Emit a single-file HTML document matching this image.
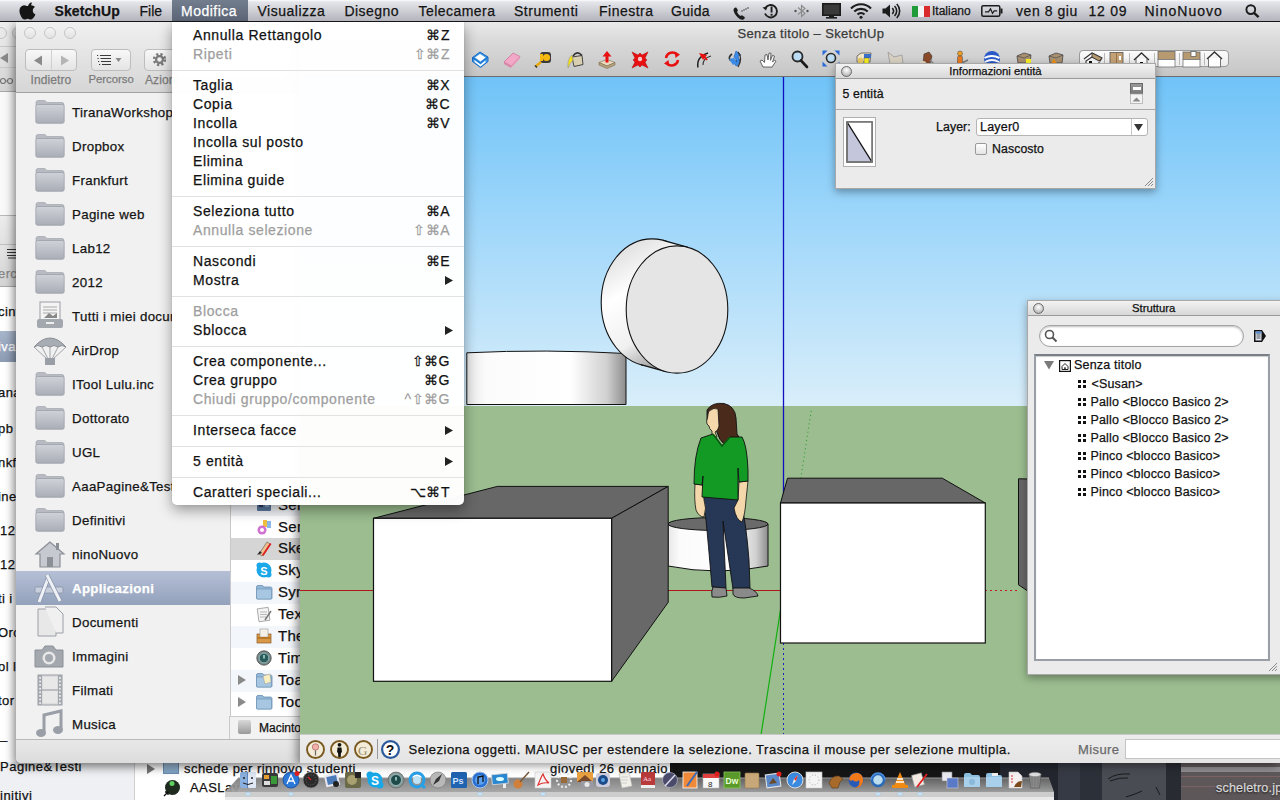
<!DOCTYPE html><html><head><meta charset="utf-8"><style>
*{margin:0;padding:0;box-sizing:border-box}
html,body{width:1280px;height:800px;overflow:hidden;background:#3c3c3c;font-family:"Liberation Sans",sans-serif;color:#111}
.a{position:absolute}
.t{position:absolute;white-space:nowrap;line-height:1;-webkit-text-stroke:0.25px}
svg{position:absolute;overflow:visible}
</style></head><body>
<div class="a" style="left:0px;top:740px;width:1280px;height:60px;background:#161616"></div>
<div class="a" style="left:1000px;top:763px;width:280px;height:37px;background:linear-gradient(90deg,#23262e 0 58px,#363a44 58px 80px,#2c3038 80px 102px,#4a4c54 102px 166px,#292b33 166px 181px,#5e5759 181px)"></div>
<div class="a" style="left:1181px;top:767px;width:99px;height:5px;background:#8e8c8e"></div>
<div class="a" style="left:1181px;top:776px;width:99px;height:1px;background:#7a6264"></div>
<div class="a" style="left:1181px;top:786px;width:99px;height:1px;background:#7a6264"></div>
<svg style="left:1106px;top:767px" width="60" height="33" viewBox="0 0 60 33"><path d="M2 12q8-6 22-5M4 14q10-4 18-3M20 30q10-3 16-6M50 20l4 8" stroke="#1a1a1a" stroke-width="1" fill="none"/></svg>
<div class="t" style="left:1216px;top:782.4px;font-size:12.5px;color:#d8d8d8;letter-spacing:0.2px;text-shadow:0 1px 2px #000">scheletro.jpg</div>
<div class="a" style="left:0px;top:740px;width:670px;height:60px;background:#fff"></div>
<div class="a" style="left:0px;top:740px;width:135px;height:60px;background:#eef0f3;border-right:1px solid #cfcfcf"></div>
<div class="t" style="left:0px;top:760.0px;font-size:13px;color:#111;letter-spacing:0.5px;">Pagine&amp;Testi</div>
<div class="t" style="left:0px;top:789.0px;font-size:13px;color:#111;letter-spacing:0.5px;">initivi</div>
<div class="a" style="left:135px;top:760px;width:535px;height:18px;background:#fff"></div>
<svg style="left:146px;top:764px" width="10" height="10" viewBox="0 0 10 10"><path d="M1 0l8 5-8 5z" fill="#777"/></svg>
<div class="a" style="left:163px;top:762px;width:16px;height:12px;background:linear-gradient(#a9c4de,#7fa3c6);border:1px solid #6a8db0"></div>
<div class="t" style="left:184px;top:761.5px;font-size:13px;color:#111;letter-spacing:0.45px;">schede per rinnovo studenti</div>
<div class="t" style="left:550px;top:761.5px;font-size:13px;color:#111;letter-spacing:0.45px;">giovedì 26 gennaio 2</div>
<svg style="left:163px;top:779px" width="18" height="18" viewBox="0 0 18 18"><circle cx="9.5" cy="8.5" r="7.5" fill="#1e2a1e"/><circle cx="9" cy="4.5" r="2.5" fill="#5fd05f"/><path d="M1 17l4-4M2 13h3v3" stroke="#111" stroke-width="1.3" fill="none"/></svg>
<div class="t" style="left:190px;top:780.5px;font-size:13px;color:#111;letter-spacing:0.45px;">AASLav</div>
<svg style="left:225px;top:776px" width="830" height="24" viewBox="0 0 830 24"><defs><linearGradient id="dk" x1="0" y1="0" x2="0" y2="1"><stop offset="0" stop-color="#6e6e6e" stop-opacity="0.85"/><stop offset="1" stop-color="#a4a4a4" stop-opacity="0.95"/></linearGradient></defs><path d="M13 2H824L829 16H0z" fill="url(#dk)"/><path d="M13 2H824" stroke="#9a9a9a" stroke-width="1"/><path d="M0 16H829v5H0z" fill="#cdcdcd"/><rect x="0" y="21" width="829" height="3" fill="#e9e9e9"/></svg>
<svg style="left:239px;top:771px" width="18" height="18" viewBox="0 0 18 18"><rect x="1" y="1" width="16" height="16" rx="2" fill="#8ab0e0"/><path d="M9 1v16" stroke="#3a5a9a"/><rect x="9" y="1" width="8" height="16" rx="1" fill="#dfe8f4"/><circle cx="5" cy="7" r="1" fill="#222"/><circle cx="13" cy="7" r="1" fill="#222"/><path d="M4 12q5 3 10 0" stroke="#222" fill="none"/></svg>
<svg style="left:261px;top:771px" width="18" height="18" viewBox="0 0 18 18"><rect x="1" y="2" width="16" height="14" rx="2" fill="#3a3a3a"/><rect x="3" y="4" width="5" height="4" fill="#e8a030"/><rect x="10" y="5" width="6" height="8" fill="#3a9a3a"/><rect x="3" y="10" width="6" height="4" fill="#ddd"/></svg>
<svg style="left:282px;top:771px" width="18" height="18" viewBox="0 0 18 18"><circle cx="9" cy="9" r="8" fill="#2a78d8" stroke="#1a4a98" stroke-width="0.8"/><path d="M5 13l4-9 4 9M6 10h6" stroke="#fff" stroke-width="1.3" fill="none"/><circle cx="15" cy="2.5" r="2.5" fill="#e02020"/></svg>
<svg style="left:302px;top:771px" width="18" height="18" viewBox="0 0 18 18"><circle cx="9" cy="9" r="8" fill="#2a2a2a" stroke="#888" stroke-width="0.8"/><circle cx="9" cy="9" r="5" fill="none" stroke="#666" stroke-dasharray="1 1.5"/><path d="M9 9l-3-3" stroke="#e02020" stroke-width="1.2"/></svg>
<svg style="left:323px;top:771px" width="18" height="18" viewBox="0 0 18 18"><rect x="2" y="3" width="14" height="12" fill="#e8e8f0" transform="rotate(-12 9 9)"/><rect x="4" y="5" width="10" height="8" fill="#4a7ab8" transform="rotate(-12 9 9)"/><circle cx="13" cy="13" r="3" fill="#222"/></svg>
<svg style="left:344px;top:771px" width="18" height="18" viewBox="0 0 18 18"><rect x="1" y="1" width="16" height="16" rx="2" fill="#6a6a48"/><circle cx="8" cy="9" r="5" fill="#a8a070"/><rect x="11" y="1" width="6" height="6" fill="#222"/></svg>
<svg style="left:366px;top:771px" width="18" height="18" viewBox="0 0 18 18"><circle cx="9" cy="9" r="7.5" fill="#18a8e8"/><circle cx="4" cy="4" r="3.5" fill="#18a8e8"/><circle cx="14" cy="14" r="3.5" fill="#18a8e8"/><text x="5" y="13.5" font-size="12" font-weight="bold" font-family="Liberation Sans" fill="#fff">S</text></svg>
<svg style="left:387px;top:771px" width="18" height="18" viewBox="0 0 18 18"><circle cx="9" cy="9" r="8" fill="#8a9a9a" stroke="#555" stroke-width="0.6"/><circle cx="9" cy="9" r="5.5" fill="#1e4a4a" stroke="#aacccc" stroke-width="0.8"/><path d="M9 6v3.5" stroke="#cee" stroke-width="1.3"/></svg>
<svg style="left:408px;top:771px" width="18" height="18" viewBox="0 0 18 18"><circle cx="9" cy="9" r="7" fill="none" stroke="#28a0e8" stroke-width="3"/><path d="M13 13l4 4" stroke="#28a0e8" stroke-width="3"/><circle cx="9" cy="9" r="4" fill="#bfe4f8"/></svg>
<svg style="left:429px;top:771px" width="18" height="18" viewBox="0 0 18 18"><circle cx="9" cy="9" r="8" fill="#b8b8b8" stroke="#777" stroke-width="0.6"/><path d="M4 14l3-6 6-5-3 7z" fill="#333"/></svg>
<svg style="left:450px;top:771px" width="18" height="18" viewBox="0 0 18 18"><rect x="1" y="1" width="16" height="16" rx="1.5" fill="#1f62b0"/><text x="2.5" y="12.5" font-size="9" font-weight="bold" font-family="Liberation Sans" fill="#cfe4ff">Ps</text></svg>
<svg style="left:471px;top:771px" width="18" height="18" viewBox="0 0 18 18"><circle cx="9" cy="9" r="8" fill="#2a70d0" stroke="#aac8f0" stroke-width="1"/><circle cx="9" cy="9" r="5" fill="#5aa0f0"/><path d="M7 13V6l5-1v6" stroke="#111" stroke-width="1.3" fill="none"/></svg>
<svg style="left:491px;top:771px" width="18" height="18" viewBox="0 0 18 18"><rect x="1" y="3" width="16" height="10" fill="#2a88d0" stroke="#ddd" stroke-width="0.8" transform="rotate(-6 9 9)"/><ellipse cx="9" cy="8" rx="4" ry="2" fill="#dff" /><rect x="12" y="13" width="3" height="4" fill="#eee"/></svg>
<svg style="left:512px;top:771px" width="18" height="18" viewBox="0 0 18 18"><circle cx="6" cy="13" r="4.5" fill="#d0803a"/><path d="M8 11l9-10" stroke="#7a5a3a" stroke-width="1.5"/></svg>
<svg style="left:534px;top:771px" width="18" height="18" viewBox="0 0 18 18"><rect x="1" y="1" width="16" height="16" fill="#f4f4f4" stroke="#ccc" stroke-width="0.6"/><path d="M4 14q3-8 5-11q2 6 6 9q-6-1-11 2z" fill="none" stroke="#e03030" stroke-width="1.2"/></svg>
<svg style="left:555px;top:771px" width="18" height="18" viewBox="0 0 18 18"><circle cx="9" cy="9" r="7" fill="none" stroke="#e8e8e8" stroke-width="2.2" stroke-dasharray="2 2"/><rect x="6" y="6" width="6" height="6" fill="#9a6a3a"/></svg>
<svg style="left:576px;top:771px" width="18" height="18" viewBox="0 0 18 18"><rect x="1" y="1" width="16" height="10" fill="#e8a040"/><path d="M1 11l8-7 8 7z" fill="#7a4a2a"/><rect x="5" y="10" width="12" height="7" rx="1" fill="#9a9aa4"/><circle cx="11" cy="13.5" r="2.5" fill="#e8e8e8"/></svg>
<svg style="left:594px;top:771px" width="18" height="18" viewBox="0 0 18 18"><rect x="2" y="2" width="14" height="14" rx="3" fill="#ccd"/><circle cx="9" cy="9" r="5" fill="#1a4a8a"/><circle cx="9" cy="9" r="2" fill="#5aa0e0"/></svg>
<svg style="left:616px;top:771px" width="18" height="18" viewBox="0 0 18 18"><path d="M3 3l10-2 3 14-10 2z" fill="#f0f0e8" stroke="#bbb" stroke-width="0.6"/><path d="M5 6h7M5 9h7M5 12h6" stroke="#ccc"/></svg>
<svg style="left:639px;top:771px" width="18" height="18" viewBox="0 0 18 18"><rect x="2" y="1" width="14" height="16" rx="1" fill="#b83a3a"/><rect x="2" y="14" width="14" height="3" fill="#eee"/><text x="4" y="10" font-size="7" font-family="Liberation Serif" fill="#fde">Aa</text></svg>
<svg style="left:661px;top:771px" width="18" height="18" viewBox="0 0 18 18"><circle cx="9" cy="9" r="7.5" fill="#4a4a6a" stroke="#aab" stroke-width="0.8"/><path d="M4 15l10-11" stroke="#dde" stroke-width="1.5"/></svg>
<svg style="left:681px;top:771px" width="18" height="18" viewBox="0 0 18 18"><rect x="2" y="1" width="14" height="16" fill="#f08a3a" stroke="#fff" stroke-width="0.8"/><path d="M6 15l10-14" stroke="#3a6ab8" stroke-width="2"/></svg>
<svg style="left:702px;top:771px" width="18" height="18" viewBox="0 0 18 18"><rect x="1" y="3" width="16" height="14" fill="#f8f8f8" stroke="#bbb" stroke-width="0.6"/><rect x="1" y="3" width="16" height="4" fill="#e04040"/><text x="6" y="15.5" font-size="8" font-family="Liberation Sans" fill="#222">8</text><circle cx="15" cy="3" r="2.5" fill="#e02020"/></svg>
<svg style="left:723px;top:771px" width="18" height="18" viewBox="0 0 18 18"><rect x="1" y="1" width="16" height="16" fill="#5a9a2a" stroke="#8ac85a" stroke-width="0.8"/><text x="2.5" y="12.5" font-size="8.5" font-weight="bold" font-family="Liberation Sans" fill="#eaffd8">Dw</text></svg>
<svg style="left:743px;top:771px" width="18" height="18" viewBox="0 0 18 18"><rect x="2" y="2" width="14" height="15" rx="1" fill="#c8a878" stroke="#9a7a4a" stroke-width="0.6"/></svg>
<svg style="left:764px;top:771px" width="18" height="18" viewBox="0 0 18 18"><rect x="2" y="3" width="14" height="13" fill="#5a88c8" stroke="#e8e8e8" stroke-width="1" transform="rotate(-8 9 9)"/><path d="M5 13l4-6 4 5z" fill="#6a4a2a"/><circle cx="15" cy="3" r="2.5" fill="#e02020"/></svg>
<svg style="left:786px;top:771px" width="18" height="18" viewBox="0 0 18 18"><circle cx="9" cy="9" r="8" fill="#3a8ae0" stroke="#ddd" stroke-width="1"/><path d="M12 4l-2 6-4 4 2-6z" fill="#eee"/><path d="M12 4l-4 4 2 2z" fill="#e03030"/></svg>
<svg style="left:805px;top:771px" width="18" height="18" viewBox="0 0 18 18"><rect x="1" y="1" width="16" height="16" fill="#f4f4f4" stroke="#ccc" stroke-width="0.6"/><circle cx="9" cy="9" r="5" fill="none" stroke="#aaa" stroke-dasharray="1 2"/></svg>
<svg style="left:827px;top:771px" width="18" height="18" viewBox="0 0 18 18"><path d="M2 12q3-8 10-7l4 3-3 3-2 6H5z" fill="#a86a2a" stroke="#5a3a1a" stroke-width="0.6"/></svg>
<svg style="left:847px;top:771px" width="18" height="18" viewBox="0 0 18 18"><circle cx="9" cy="9" r="7.5" fill="#2a5ab8"/><path d="M2 8q2-7 9-6 6 2 5 9-2 6-8 6 6-3 4-8q-3 3-6 0-3 2-4-1z" fill="#f07a1a"/></svg>
<svg style="left:869px;top:771px" width="18" height="18" viewBox="0 0 18 18"><circle cx="9" cy="9" r="6" fill="#bde" stroke="#2a6ab8" stroke-width="2.5"/><path d="M2 9a7 7 0 0 1 14 0" fill="none" stroke="#4a90e0" stroke-width="1.5"/></svg>
<svg style="left:891px;top:771px" width="18" height="18" viewBox="0 0 18 18"><path d="M9 1l6 14H3z" fill="#f08a10"/><path d="M6 8h6M5 11h8" stroke="#fff" stroke-width="1.5"/><rect x="1" y="14" width="16" height="3" fill="#f08a10"/></svg>
<svg style="left:911px;top:771px" width="18" height="18" viewBox="0 0 18 18"><rect x="2" y="3" width="10" height="12" fill="#f4ece4" stroke="#aaa" stroke-width="0.6" transform="rotate(-15 7 9)"/><path d="M6 16l10-13" stroke="#e02020" stroke-width="1.8"/></svg>
<svg style="left:941px;top:771px" width="18" height="18" viewBox="0 0 18 18"><rect x="1" y="1" width="10" height="9" fill="#e8e8f0" stroke="#888" stroke-width="0.6"/><rect x="6" y="7" width="11" height="10" fill="#5a7ac8" stroke="#ccd" stroke-width="0.6"/></svg>
<svg style="left:963px;top:771px" width="18" height="18" viewBox="0 0 18 18"><path d="M1 4q0-2 2-2h4l2 2h6q2 0 2 2v10H1z" fill="#8ec0e0"/><rect x="1" y="6" width="16" height="10" rx="1" fill="#a8d0ea"/><circle cx="9" cy="11" r="3" fill="#8ab8d8"/></svg>
<svg style="left:985px;top:771px" width="18" height="18" viewBox="0 0 18 18"><path d="M1 4q0-2 2-2h4l2 2h6q2 0 2 2v10H1z" fill="#8ec0e0"/><rect x="1" y="6" width="16" height="10" rx="1" fill="#a8d0ea"/><rect x="7" y="2" width="6" height="3" fill="#eee"/></svg>
<svg style="left:1006px;top:771px" width="18" height="18" viewBox="0 0 18 18"><path d="M3 1h9l4 4v12H3z" fill="#f4f0f0" stroke="#ccc" stroke-width="0.6"/><path d="M5 5h2M5 8h2M5 11h2" stroke="#e07070" stroke-width="1.5"/><path d="M8 16q2-6 8-6l-1 6z" fill="#7a4a1a"/></svg>
<svg style="left:1026px;top:771px" width="18" height="18" viewBox="0 0 18 18"><path d="M3 3h12l-1.5 14h-9z" fill="#8a8a8a" stroke="#555" stroke-width="0.6"/><ellipse cx="9" cy="3.5" rx="6" ry="2.2" fill="#ddd" stroke="#777" stroke-width="0.6"/><path d="M6 6v9M9 6v9M12 6v9" stroke="#6a6a6a" stroke-width="0.6"/></svg>
<div class="a" style="left:246px;top:793px;width:4px;height:2px;background:#bfe6ff;border-radius:1px;box-shadow:0 0 3px #9cf"></div>
<div class="a" style="left:289px;top:793px;width:4px;height:2px;background:#bfe6ff;border-radius:1px;box-shadow:0 0 3px #9cf"></div>
<div class="a" style="left:478px;top:793px;width:4px;height:2px;background:#bfe6ff;border-radius:1px;box-shadow:0 0 3px #9cf"></div>
<div class="a" style="left:541px;top:793px;width:4px;height:2px;background:#bfe6ff;border-radius:1px;box-shadow:0 0 3px #9cf"></div>
<div class="a" style="left:876px;top:793px;width:4px;height:2px;background:#bfe6ff;border-radius:1px;box-shadow:0 0 3px #9cf"></div>
<div class="a" style="left:898px;top:793px;width:4px;height:2px;background:#bfe6ff;border-radius:1px;box-shadow:0 0 3px #9cf"></div>
<div class="a" style="left:918px;top:793px;width:4px;height:2px;background:#bfe6ff;border-radius:1px;box-shadow:0 0 3px #9cf"></div>
<div class="a" style="left:0px;top:22px;width:16px;height:740px;background:#fff"></div>
<div class="a" style="left:0px;top:22px;width:16px;height:70px;background:linear-gradient(#eeeeee,#d4d4d4);border-bottom:1px solid #a8a8a8"></div>
<div class="a" style="left:0px;top:46px;width:16px;height:1px;background:#c8c8c8"></div>
<div class="a" style="left:0px;top:67px;width:16px;height:1px;background:#c8c8c8"></div>
<div class="a" style="left:-5px;top:27px;width:12px;height:12px;border-radius:50%;border:1px solid #c2c2c2;background:#e8e8e8"></div>
<div class="a" style="left:12px;top:27px;width:12px;height:12px;border-radius:50%;border:1px solid #c2c2c2;background:#e8e8e8"></div>
<svg style="left:0px;top:53px" width="9" height="10" viewBox="0 0 9 10"><path d="M0 5L8 0v10z" fill="#8a8a8a"/></svg>
<svg style="left:0px;top:77px" width="14" height="8" viewBox="0 0 14 8"><circle cx="3" cy="4" r="2.5" fill="none" stroke="#777" stroke-width="1.2"/><circle cx="10" cy="4" r="2.5" fill="none" stroke="#777" stroke-width="1.2"/><path d="M5.5 4h2" stroke="#777"/></svg>
<div class="a" style="left:0px;top:92px;width:16px;height:123px;background:#f9f9f9"></div>
<div class="a" style="left:0px;top:215px;width:16px;height:29px;background:linear-gradient(#ececec,#e2e2e2);border-top:1px solid #b8b8b8"></div>
<div class="a" style="left:0px;top:244px;width:16px;height:43px;background:linear-gradient(#e4e4e4,#d4d4d4);border-top:1px solid #c0c0c0;border-bottom:1px solid #a8a8a8"></div>
<svg style="left:4px;top:248px" width="12" height="11" viewBox="0 0 12 11"><path d="M3 1.5h9M3 4.5h9M3 7.5h9M4 10h8" stroke="#333" stroke-width="1.1"/></svg>
<div class="a" style="left:0px;top:331px;width:16px;height:31px;background:linear-gradient(#a8b6cc,#8d9bb3)"></div>
<div class="t" style="left:-2px;top:267.0px;font-size:13px;color:#888;letter-spacing:0.4px;">erc</div>
<div class="t" style="left:-2px;top:305.0px;font-size:13px;color:#111;letter-spacing:0.4px;">cint</div>
<div class="t" style="left:-2px;top:340.0px;font-size:13px;color:#fff;letter-spacing:0.4px;">iva</div>
<div class="t" style="left:-2px;top:386.0px;font-size:13px;color:#111;letter-spacing:0.4px;">ana</div>
<div class="t" style="left:-2px;top:422.0px;font-size:13px;color:#111;letter-spacing:0.4px;">pb</div>
<div class="t" style="left:-2px;top:456.0px;font-size:13px;color:#111;letter-spacing:0.4px;">nkf</div>
<div class="t" style="left:-2px;top:490.0px;font-size:13px;color:#111;letter-spacing:0.4px;">ine</div>
<div class="t" style="left:0px;top:524.0px;font-size:13px;color:#111;letter-spacing:0.4px;">12</div>
<div class="t" style="left:0px;top:558.0px;font-size:13px;color:#111;letter-spacing:0.4px;">12</div>
<div class="t" style="left:-2px;top:592.0px;font-size:13px;color:#111;letter-spacing:0.4px;">ti i</div>
<div class="t" style="left:-2px;top:626.0px;font-size:13px;color:#111;letter-spacing:0.4px;">Oro</div>
<div class="t" style="left:-2px;top:660.0px;font-size:13px;color:#111;letter-spacing:0.4px;">ol l</div>
<div class="t" style="left:-2px;top:694.0px;font-size:13px;color:#111;letter-spacing:0.4px;">tor</div>
<div class="t" style="left:0px;top:728.0px;font-size:13px;color:#111;letter-spacing:0.4px;">_</div>
<div class="a" style="left:16px;top:22px;width:284px;height:741px;background:#ececec;border-radius:0 0 5px 5px;box-shadow:-2px 4px 10px rgba(0,0,0,.5)"></div>
<div class="a" style="left:16px;top:22px;width:284px;height:71px;background:linear-gradient(#f0f0f0,#e6e6e6 40%,#d6d6d6);border-bottom:1px solid #a3a3a3"></div>
<div class="a" style="left:24px;top:27px;width:12px;height:12px;border-radius:50%;border:1.4px solid #c6c6c6;background:linear-gradient(#f4f4f4,#e2e2e2)"></div>
<div class="a" style="left:44px;top:27px;width:12px;height:12px;border-radius:50%;border:1.4px solid #c6c6c6;background:linear-gradient(#f4f4f4,#e2e2e2)"></div>
<div class="a" style="left:64px;top:27px;width:12px;height:12px;border-radius:50%;border:1.4px solid #c6c6c6;background:linear-gradient(#f4f4f4,#e2e2e2)"></div>
<div class="a" style="left:25px;top:49px;width:52px;height:22px;border:1px solid #bdbdbd;border-radius:4px;background:linear-gradient(#f8f8f8,#e4e4e4)"></div>
<div class="a" style="left:51px;top:50px;width:1px;height:20px;background:#d0d0d0"></div>
<svg style="left:34px;top:55px" width="36" height="11" viewBox="0 0 36 11"><path d="M0 5.5L8 0.5v10z" fill="#8a8a8a"/><path d="M35 5.5L27 0.5v10z" fill="#b4b4b4"/></svg>
<div class="a" style="left:91px;top:49px;width:40px;height:22px;border:1px solid #bdbdbd;border-radius:4px;background:linear-gradient(#f8f8f8,#e4e4e4)"></div>
<svg style="left:97px;top:54px" width="30" height="12" viewBox="0 0 30 12"><g stroke="#3a3a3a" stroke-width="1"><path d="M3 1.5h11M3.5 4.5h10.5M4 7.5h10M5 10.5h9"/></g><g fill="#3a3a3a"><rect x="0" y="1" width="1.2" height="1"/><rect x="0.5" y="4" width="1.2" height="1"/><rect x="1" y="7" width="1.2" height="1"/><rect x="2" y="10" width="1.2" height="1"/></g><path d="M18.5 4h6l-3 4z" fill="#8a8a8a"/></svg>
<div class="a" style="left:144px;top:49px;width:40px;height:22px;border:1px solid #bdbdbd;border-radius:4px;background:linear-gradient(#f8f8f8,#e4e4e4)"></div>
<svg style="left:152px;top:52px" width="15" height="15" viewBox="0 0 15 15"><circle cx="7.5" cy="7.5" r="5.3" fill="none" stroke="#7a7a7a" stroke-width="2.8" stroke-dasharray="2.2 2"/><circle cx="7.5" cy="7.5" r="3.4" fill="none" stroke="#7a7a7a" stroke-width="2.2"/></svg>
<div class="t" style="left:30.5px;top:73.8px;font-size:12px;color:#7b7b7b;letter-spacing:0.1px;">Indietro</div>
<div class="t" style="left:88.5px;top:74.4px;font-size:11.3px;color:#7b7b7b;letter-spacing:0px;">Percorso</div>
<div class="t" style="left:145px;top:73.8px;font-size:12px;color:#7b7b7b;letter-spacing:0.1px;">Azioni</div>
<div class="a" style="left:16px;top:93px;width:214px;height:646px;background:#f1f1f1"></div>
<div class="a" style="left:16px;top:571px;width:214px;height:34px;background:linear-gradient(#b5c0d6,#93a1bb)"></div>
<div class="a" style="left:0;top:0;width:172px;height:800px;overflow:hidden"><div class="t" style="left:72px;top:105.7px;font-size:13.3px;color:#151515;letter-spacing:0.32px;">TiranaWorkshop</div></div>
<svg style="left:35px;top:99px" width="30" height="25" viewBox="0 0 30 25"><defs><linearGradient id="fg" x1="0" y1="0" x2="0" y2="1"><stop offset="0" stop-color="#cfd2d8"/><stop offset="1" stop-color="#a9adb6"/></linearGradient></defs><path d="M1 3.5q0-2 2-2h7l2 2h15q2 0 2 2v1H1z" fill="#b8bbc2" stroke="#9a9ea6" stroke-width="0.6"/><rect x="0.8" y="5.5" width="28.4" height="18.8" rx="1.8" fill="url(#fg)" stroke="#979ba3" stroke-width="0.7"/></svg>
<div class="a" style="left:0;top:0;width:172px;height:800px;overflow:hidden"><div class="t" style="left:72px;top:139.7px;font-size:13.3px;color:#151515;letter-spacing:0.32px;">Dropbox</div></div>
<svg style="left:35px;top:133px" width="30" height="25" viewBox="0 0 30 25"><defs><linearGradient id="fg" x1="0" y1="0" x2="0" y2="1"><stop offset="0" stop-color="#cfd2d8"/><stop offset="1" stop-color="#a9adb6"/></linearGradient></defs><path d="M1 3.5q0-2 2-2h7l2 2h15q2 0 2 2v1H1z" fill="#b8bbc2" stroke="#9a9ea6" stroke-width="0.6"/><rect x="0.8" y="5.5" width="28.4" height="18.8" rx="1.8" fill="url(#fg)" stroke="#979ba3" stroke-width="0.7"/></svg>
<div class="a" style="left:0;top:0;width:172px;height:800px;overflow:hidden"><div class="t" style="left:72px;top:173.7px;font-size:13.3px;color:#151515;letter-spacing:0.32px;">Frankfurt</div></div>
<svg style="left:35px;top:167px" width="30" height="25" viewBox="0 0 30 25"><defs><linearGradient id="fg" x1="0" y1="0" x2="0" y2="1"><stop offset="0" stop-color="#cfd2d8"/><stop offset="1" stop-color="#a9adb6"/></linearGradient></defs><path d="M1 3.5q0-2 2-2h7l2 2h15q2 0 2 2v1H1z" fill="#b8bbc2" stroke="#9a9ea6" stroke-width="0.6"/><rect x="0.8" y="5.5" width="28.4" height="18.8" rx="1.8" fill="url(#fg)" stroke="#979ba3" stroke-width="0.7"/></svg>
<div class="a" style="left:0;top:0;width:172px;height:800px;overflow:hidden"><div class="t" style="left:72px;top:207.7px;font-size:13.3px;color:#151515;letter-spacing:0.32px;">Pagine web</div></div>
<svg style="left:35px;top:201px" width="30" height="25" viewBox="0 0 30 25"><defs><linearGradient id="fg" x1="0" y1="0" x2="0" y2="1"><stop offset="0" stop-color="#cfd2d8"/><stop offset="1" stop-color="#a9adb6"/></linearGradient></defs><path d="M1 3.5q0-2 2-2h7l2 2h15q2 0 2 2v1H1z" fill="#b8bbc2" stroke="#9a9ea6" stroke-width="0.6"/><rect x="0.8" y="5.5" width="28.4" height="18.8" rx="1.8" fill="url(#fg)" stroke="#979ba3" stroke-width="0.7"/></svg>
<div class="a" style="left:0;top:0;width:172px;height:800px;overflow:hidden"><div class="t" style="left:72px;top:241.7px;font-size:13.3px;color:#151515;letter-spacing:0.32px;">Lab12</div></div>
<svg style="left:35px;top:235px" width="30" height="25" viewBox="0 0 30 25"><defs><linearGradient id="fg" x1="0" y1="0" x2="0" y2="1"><stop offset="0" stop-color="#cfd2d8"/><stop offset="1" stop-color="#a9adb6"/></linearGradient></defs><path d="M1 3.5q0-2 2-2h7l2 2h15q2 0 2 2v1H1z" fill="#b8bbc2" stroke="#9a9ea6" stroke-width="0.6"/><rect x="0.8" y="5.5" width="28.4" height="18.8" rx="1.8" fill="url(#fg)" stroke="#979ba3" stroke-width="0.7"/></svg>
<div class="a" style="left:0;top:0;width:172px;height:800px;overflow:hidden"><div class="t" style="left:72px;top:275.7px;font-size:13.3px;color:#151515;letter-spacing:0.32px;">2012</div></div>
<svg style="left:35px;top:269px" width="30" height="25" viewBox="0 0 30 25"><defs><linearGradient id="fg" x1="0" y1="0" x2="0" y2="1"><stop offset="0" stop-color="#cfd2d8"/><stop offset="1" stop-color="#a9adb6"/></linearGradient></defs><path d="M1 3.5q0-2 2-2h7l2 2h15q2 0 2 2v1H1z" fill="#b8bbc2" stroke="#9a9ea6" stroke-width="0.6"/><rect x="0.8" y="5.5" width="28.4" height="18.8" rx="1.8" fill="url(#fg)" stroke="#979ba3" stroke-width="0.7"/></svg>
<div class="a" style="left:0;top:0;width:172px;height:800px;overflow:hidden"><div class="t" style="left:72px;top:309.7px;font-size:13.3px;color:#151515;letter-spacing:0.32px;">Tutti i miei documenti</div></div>
<svg style="left:35px;top:300px" width="30" height="30" viewBox="0 0 30 30"><rect x="5" y="2" width="20" height="19" fill="#f4f4f4" stroke="#9a9ea6"/><path d="M8 7h14M8 10h14M8 13h14" stroke="#aaa"/><path d="M9 18l5-5 4 3 4-3v5z" fill="#888"/><rect x="2" y="19" width="26" height="9" rx="2" fill="#a3a7ae"/><rect x="11" y="22" width="8" height="2" fill="#eee"/></svg>
<div class="a" style="left:0;top:0;width:172px;height:800px;overflow:hidden"><div class="t" style="left:72px;top:343.7px;font-size:13.3px;color:#151515;letter-spacing:0.32px;">AirDrop</div></div>
<svg style="left:32px;top:335px" width="36" height="32" viewBox="0 0 36 32"><path d="M2 12Q18-6 34 12Q30 9 26 12Q22 9 18 12Q14 9 10 12Q6 9 2 12z" fill="#a8acb3" stroke="#8b8f96"/><path d="M2 12L15 24M10 12L16 24M26 12L20 24M34 12L21 24M18 12v12" stroke="#8b8f96" stroke-width="0.8"/><rect x="13" y="23" width="10" height="7" fill="#9a9ea6"/></svg>
<div class="a" style="left:0;top:0;width:172px;height:800px;overflow:hidden"><div class="t" style="left:72px;top:377.7px;font-size:13.3px;color:#151515;letter-spacing:0.32px;">ITool Lulu.inc</div></div>
<svg style="left:35px;top:371px" width="30" height="25" viewBox="0 0 30 25"><defs><linearGradient id="fg" x1="0" y1="0" x2="0" y2="1"><stop offset="0" stop-color="#cfd2d8"/><stop offset="1" stop-color="#a9adb6"/></linearGradient></defs><path d="M1 3.5q0-2 2-2h7l2 2h15q2 0 2 2v1H1z" fill="#b8bbc2" stroke="#9a9ea6" stroke-width="0.6"/><rect x="0.8" y="5.5" width="28.4" height="18.8" rx="1.8" fill="url(#fg)" stroke="#979ba3" stroke-width="0.7"/></svg>
<div class="a" style="left:0;top:0;width:172px;height:800px;overflow:hidden"><div class="t" style="left:72px;top:411.7px;font-size:13.3px;color:#151515;letter-spacing:0.32px;">Dottorato</div></div>
<svg style="left:35px;top:405px" width="30" height="25" viewBox="0 0 30 25"><defs><linearGradient id="fg" x1="0" y1="0" x2="0" y2="1"><stop offset="0" stop-color="#cfd2d8"/><stop offset="1" stop-color="#a9adb6"/></linearGradient></defs><path d="M1 3.5q0-2 2-2h7l2 2h15q2 0 2 2v1H1z" fill="#b8bbc2" stroke="#9a9ea6" stroke-width="0.6"/><rect x="0.8" y="5.5" width="28.4" height="18.8" rx="1.8" fill="url(#fg)" stroke="#979ba3" stroke-width="0.7"/></svg>
<div class="a" style="left:0;top:0;width:172px;height:800px;overflow:hidden"><div class="t" style="left:72px;top:445.7px;font-size:13.3px;color:#151515;letter-spacing:0.32px;">UGL</div></div>
<svg style="left:35px;top:439px" width="30" height="25" viewBox="0 0 30 25"><defs><linearGradient id="fg" x1="0" y1="0" x2="0" y2="1"><stop offset="0" stop-color="#cfd2d8"/><stop offset="1" stop-color="#a9adb6"/></linearGradient></defs><path d="M1 3.5q0-2 2-2h7l2 2h15q2 0 2 2v1H1z" fill="#b8bbc2" stroke="#9a9ea6" stroke-width="0.6"/><rect x="0.8" y="5.5" width="28.4" height="18.8" rx="1.8" fill="url(#fg)" stroke="#979ba3" stroke-width="0.7"/></svg>
<div class="a" style="left:0;top:0;width:172px;height:800px;overflow:hidden"><div class="t" style="left:72px;top:479.7px;font-size:13.3px;color:#151515;letter-spacing:0.32px;">AaaPagine&amp;Testi</div></div>
<svg style="left:35px;top:473px" width="30" height="25" viewBox="0 0 30 25"><defs><linearGradient id="fg" x1="0" y1="0" x2="0" y2="1"><stop offset="0" stop-color="#cfd2d8"/><stop offset="1" stop-color="#a9adb6"/></linearGradient></defs><path d="M1 3.5q0-2 2-2h7l2 2h15q2 0 2 2v1H1z" fill="#b8bbc2" stroke="#9a9ea6" stroke-width="0.6"/><rect x="0.8" y="5.5" width="28.4" height="18.8" rx="1.8" fill="url(#fg)" stroke="#979ba3" stroke-width="0.7"/></svg>
<div class="a" style="left:0;top:0;width:172px;height:800px;overflow:hidden"><div class="t" style="left:72px;top:513.7px;font-size:13.3px;color:#151515;letter-spacing:0.32px;">Definitivi</div></div>
<svg style="left:35px;top:507px" width="30" height="25" viewBox="0 0 30 25"><defs><linearGradient id="fg" x1="0" y1="0" x2="0" y2="1"><stop offset="0" stop-color="#cfd2d8"/><stop offset="1" stop-color="#a9adb6"/></linearGradient></defs><path d="M1 3.5q0-2 2-2h7l2 2h15q2 0 2 2v1H1z" fill="#b8bbc2" stroke="#9a9ea6" stroke-width="0.6"/><rect x="0.8" y="5.5" width="28.4" height="18.8" rx="1.8" fill="url(#fg)" stroke="#979ba3" stroke-width="0.7"/></svg>
<div class="a" style="left:0;top:0;width:172px;height:800px;overflow:hidden"><div class="t" style="left:72px;top:547.7px;font-size:13.3px;color:#151515;letter-spacing:0.32px;">ninoNuovo</div></div>
<svg style="left:35px;top:540px" width="30" height="28" viewBox="0 0 30 28"><path d="M15 2L1 14h4v13h20V14h4z" fill="#c6c9cf" stroke="#8b8f96" stroke-width="1.2"/><rect x="21" y="3" width="3" height="7" fill="#8b8f96"/><rect x="12" y="17" width="6" height="10" fill="#8b8f96"/></svg>
<div class="a" style="left:0;top:0;width:172px;height:800px;overflow:hidden"><div class="t" style="left:72px;top:581.7px;font-size:13.3px;color:#fff;letter-spacing:0.32px;font-weight:bold;">Applicazioni</div></div>
<svg style="left:32px;top:573px" width="34" height="32" viewBox="0 0 34 32"><rect x="3" y="14" width="28" height="6" rx="1" fill="#c8cfdc" stroke="#8a95aa" stroke-width="0.8"/><path d="M17 3L7 29" stroke="#8a95aa" stroke-width="4.5"/><path d="M17 3L7 29" stroke="#eef1f6" stroke-width="3"/><path d="M15 2l13 26" stroke="#8a95aa" stroke-width="4.5"/><path d="M15 2l13 26" stroke="#eef1f6" stroke-width="3"/></svg>
<div class="a" style="left:0;top:0;width:172px;height:800px;overflow:hidden"><div class="t" style="left:72px;top:615.7px;font-size:13.3px;color:#151515;letter-spacing:0.32px;">Documenti</div></div>
<svg style="left:35px;top:606px" width="30" height="32" viewBox="0 0 30 32"><path d="M3 3h13l5 5v22H3z" fill="#e8e8e8" stroke="#9a9ea6"/><path d="M10 1h11l7 7v19h-7" fill="#f0f0f0" stroke="#9a9ea6"/></svg>
<div class="a" style="left:0;top:0;width:172px;height:800px;overflow:hidden"><div class="t" style="left:72px;top:649.7px;font-size:13.3px;color:#151515;letter-spacing:0.32px;">Immagini</div></div>
<svg style="left:33px;top:643px" width="32" height="26" viewBox="0 0 32 26"><path d="M2 7h7l3-4h8l3 4h7v17H2z" fill="#a3a7ae" stroke="#8b8f96"/><circle cx="16" cy="15" r="6.5" fill="#e8e8e8"/><circle cx="16" cy="15" r="4" fill="#a3a7ae"/></svg>
<div class="a" style="left:0;top:0;width:172px;height:800px;overflow:hidden"><div class="t" style="left:72px;top:683.7px;font-size:13.3px;color:#151515;letter-spacing:0.32px;">Filmati</div></div>
<svg style="left:35px;top:674px" width="30" height="32" viewBox="0 0 30 32"><rect x="3" y="1" width="24" height="30" fill="#dcdcdc" stroke="#9a9ea6"/><rect x="3" y="1" width="4" height="30" fill="#a3a7ae"/><rect x="23" y="1" width="4" height="30" fill="#a3a7ae"/><rect x="4.3" y="3.0" width="1.6" height="1.8" fill="#f4f4f4"/><rect x="24.1" y="3.0" width="1.6" height="1.8" fill="#f4f4f4"/><rect x="4.3" y="6.6" width="1.6" height="1.8" fill="#f4f4f4"/><rect x="24.1" y="6.6" width="1.6" height="1.8" fill="#f4f4f4"/><rect x="4.3" y="10.2" width="1.6" height="1.8" fill="#f4f4f4"/><rect x="24.1" y="10.2" width="1.6" height="1.8" fill="#f4f4f4"/><rect x="4.3" y="13.8" width="1.6" height="1.8" fill="#f4f4f4"/><rect x="24.1" y="13.8" width="1.6" height="1.8" fill="#f4f4f4"/><rect x="4.3" y="17.4" width="1.6" height="1.8" fill="#f4f4f4"/><rect x="24.1" y="17.4" width="1.6" height="1.8" fill="#f4f4f4"/><rect x="4.3" y="21.0" width="1.6" height="1.8" fill="#f4f4f4"/><rect x="24.1" y="21.0" width="1.6" height="1.8" fill="#f4f4f4"/><rect x="4.3" y="24.6" width="1.6" height="1.8" fill="#f4f4f4"/><rect x="24.1" y="24.6" width="1.6" height="1.8" fill="#f4f4f4"/><rect x="4.3" y="28.2" width="1.6" height="1.8" fill="#f4f4f4"/><rect x="24.1" y="28.2" width="1.6" height="1.8" fill="#f4f4f4"/><path d="M7 16h16" stroke="#9a9ea6"/><rect x="8" y="3" width="14" height="12" fill="#e8e8e8"/><rect x="8" y="17" width="14" height="12" fill="#e8e8e8"/></svg>
<div class="a" style="left:0;top:0;width:172px;height:800px;overflow:hidden"><div class="t" style="left:72px;top:717.7px;font-size:13.3px;color:#151515;letter-spacing:0.32px;">Musica</div></div>
<svg style="left:35px;top:708px" width="30" height="32" viewBox="0 0 30 32"><path d="M9 24V7l17-4v18" fill="none" stroke="#9a9ea6" stroke-width="3"/><ellipse cx="6" cy="25" rx="5" ry="4" fill="#9a9ea6"/><ellipse cx="23" cy="22" rx="5" ry="4" fill="#9a9ea6"/></svg>
<div class="a" style="left:230px;top:93px;width:70px;height:623px;background:#fff;border-left:1px solid #c9c9c9"></div>
<div class="a" style="left:231px;top:450px;width:69px;height:22px;background:#f3f6fa"></div>
<div class="a" style="left:231px;top:494px;width:69px;height:22px;background:#f3f6fa"></div>
<div class="a" style="left:231px;top:538px;width:69px;height:22px;background:#f3f6fa"></div>
<div class="a" style="left:231px;top:582px;width:69px;height:22px;background:#f3f6fa"></div>
<div class="a" style="left:231px;top:626px;width:69px;height:22px;background:#f3f6fa"></div>
<div class="a" style="left:231px;top:670px;width:69px;height:22px;background:#f3f6fa"></div>
<div class="a" style="left:231px;top:538px;width:69px;height:22px;background:#d5d5d5"></div>
<svg style="left:256px;top:497px" width="16" height="16" viewBox="0 0 16 16"><rect x="1" y="2" width="14" height="12" rx="1" fill="#5a7aa0"/><rect x="3" y="4" width="4" height="6" fill="#2a3a5a"/><rect x="9" y="4" width="4" height="6" fill="#8aa8c8"/></svg>
<div class="t" style="left:278px;top:497.3px;font-size:15px;color:#111;letter-spacing:0.3px;">Ser</div>
<svg style="left:256px;top:519px" width="16" height="16" viewBox="0 0 16 16"><rect x="7" y="1" width="4" height="7" fill="#f0c040"/><rect x="11" y="2" width="4" height="7" fill="#8ab8e8"/><circle cx="6" cy="11" r="4.5" fill="#d070d0"/><circle cx="6" cy="11" r="2" fill="#fff"/></svg>
<div class="t" style="left:278px;top:519.3px;font-size:15px;color:#111;letter-spacing:0.3px;">Ser</div>
<svg style="left:256px;top:540px" width="16" height="16" viewBox="0 0 16 16"><path d="M3 14l8-12 3 2-8 12z" fill="#f0c090" stroke="#555" stroke-width="0.6"/><path d="M6 15L14 3l1.5 1-8 12z" fill="#e02020"/><path d="M1 15l3-4 2 2z" fill="#222"/></svg>
<div class="t" style="left:278px;top:540.3px;font-size:15px;color:#111;letter-spacing:0.3px;">Ske</div>
<svg style="left:256px;top:562px" width="16" height="16" viewBox="0 0 16 16"><circle cx="8" cy="8" r="7.5" fill="#1aa8e8"/><circle cx="3.5" cy="3.5" r="3" fill="#1aa8e8"/><circle cx="12.5" cy="12.5" r="3" fill="#1aa8e8"/><text x="4.3" y="12.5" font-size="11" font-weight="bold" font-family="Liberation Sans" fill="#fff">S</text></svg>
<div class="t" style="left:278px;top:562.3px;font-size:15px;color:#111;letter-spacing:0.3px;">Sky</div>
<svg style="left:256px;top:584px" width="16" height="16" viewBox="0 0 16 16"><path d="M0.5 3q0-1.5 1.5-1.5h4.5l1.5 1.5h6.5q1.5 0 1.5 1.5v9.5q0 1-1 1H1.5q-1 0-1-1z" fill="#93b8d8" stroke="#6a90b4" stroke-width="0.8"/><rect x="0.5" y="5" width="15" height="10" rx="1" fill="#a6c6e2" stroke="#6a90b4" stroke-width="0.6"/></svg>
<div class="t" style="left:278px;top:584.3px;font-size:15px;color:#111;letter-spacing:0.3px;">Syn</div>
<svg style="left:256px;top:606px" width="16" height="16" viewBox="0 0 16 16"><rect x="2" y="2" width="11" height="13" fill="#f4f4f4" stroke="#999" stroke-width="0.8" transform="rotate(-8 8 8)"/><path d="M4 6h7M4 8.5h7M4 11h6" stroke="#aaa" stroke-width="0.8"/><path d="M9 14l6-9" stroke="#777" stroke-width="1.5"/></svg>
<div class="t" style="left:278px;top:606.3px;font-size:15px;color:#111;letter-spacing:0.3px;">Tex</div>
<svg style="left:256px;top:628px" width="16" height="16" viewBox="0 0 16 16"><rect x="1" y="6" width="14" height="9" fill="#d89848" stroke="#8a5a20" stroke-width="0.7"/><rect x="4" y="1" width="8" height="8" fill="#f4f0e8" stroke="#999" stroke-width="0.6"/><rect x="1" y="9" width="14" height="2" fill="#b87828"/></svg>
<div class="t" style="left:278px;top:628.3px;font-size:15px;color:#111;letter-spacing:0.3px;">The</div>
<svg style="left:256px;top:650px" width="16" height="16" viewBox="0 0 16 16"><circle cx="8" cy="8" r="7.2" fill="#7a8a8a" stroke="#444" stroke-width="0.8"/><circle cx="8" cy="8" r="4.8" fill="#2a5a5a" stroke="#9ac0c0" stroke-width="0.8"/><path d="M8 5v3.5" stroke="#cfe" stroke-width="1.2"/></svg>
<div class="t" style="left:278px;top:650.3px;font-size:15px;color:#111;letter-spacing:0.3px;">Tim</div>
<svg style="left:256px;top:672px" width="16" height="16" viewBox="0 0 16 16"><path d="M0.5 3q0-1.5 1.5-1.5h4.5l1.5 1.5h6.5q1.5 0 1.5 1.5v9.5q0 1-1 1H1.5q-1 0-1-1z" fill="#93b8d8" stroke="#6a90b4" stroke-width="0.8"/><rect x="0.5" y="5" width="15" height="10" rx="1" fill="#a6c6e2" stroke="#6a90b4" stroke-width="0.6"/><path d="M7 4l7-2 1 8-6 2z" fill="#f8f0c0" stroke="#999" stroke-width="0.5"/></svg>
<div class="t" style="left:278px;top:672.3px;font-size:15px;color:#111;letter-spacing:0.3px;">Toa</div>
<svg style="left:256px;top:694px" width="16" height="16" viewBox="0 0 16 16"><path d="M0.5 3q0-1.5 1.5-1.5h4.5l1.5 1.5h6.5q1.5 0 1.5 1.5v9.5q0 1-1 1H1.5q-1 0-1-1z" fill="#93b8d8" stroke="#6a90b4" stroke-width="0.8"/><rect x="0.5" y="5" width="15" height="10" rx="1" fill="#a6c6e2" stroke="#6a90b4" stroke-width="0.6"/></svg>
<div class="t" style="left:278px;top:694.3px;font-size:15px;color:#111;letter-spacing:0.3px;">Too</div>
<svg style="left:237px;top:675px" width="10" height="35" viewBox="0 0 10 35"><path d="M1 0l8 5-8 5zM1 22l8 5-8 5z" fill="#8a8a8a"/></svg>
<div class="a" style="left:229px;top:716px;width:71px;height:23px;background:#f2f2f2;border-top:1px solid #c9c9c9;border-left:1px solid #c9c9c9"></div>
<div class="a" style="left:238px;top:720px;width:13px;height:14px;background:linear-gradient(#d8d8d8,#9a9a9a);border-radius:2px"></div>
<div class="t" style="left:259px;top:721.8px;font-size:12px;color:#111;letter-spacing:0px;">Macintosh</div>
<div class="a" style="left:16px;top:739px;width:284px;height:24px;background:linear-gradient(#e8e8e8,#dcdcdc);border-top:1px solid #b9b9b9;border-radius:0 0 0 5px"></div>
<div class="a" style="left:300px;top:22px;width:980px;height:741px;background:#e4e4e4;box-shadow:-3px 2px 9px rgba(0,0,0,.45)"></div>
<div class="a" style="left:300px;top:22px;width:980px;height:55px;background:linear-gradient(#e9e9e9,#dadada 35%,#c6c6c6 100%);border-bottom:1px solid #6e6e6e"></div>
<div class="t" style="left:737.5px;top:27.0px;font-size:13px;color:#3a3a3a;letter-spacing:0.35px;">Senza titolo – SketchUp</div>
<svg style="left:471px;top:50px" width="18" height="18" viewBox="0 0 18 18"><path d="M1.5 7.5L9 2l8 5-7.5 6z" fill="#3a9ae8" stroke="#1a6ac8" stroke-width="1"/><path d="M1.5 7.5v4l8 6 7.5-6V7l-7.5 6z" fill="#3a9ae8" stroke="#1a6ac8" stroke-width="1"/><path d="M4 7.5L9 4l5.5 3.5-5 4z" fill="#fff"/><path d="M3.5 10l6 4.5 5-4v2l-5 4-6-4.5z" fill="#fff"/></svg>
<svg style="left:503px;top:50px" width="18" height="18" viewBox="0 0 18 18"><path d="M1 12L10 3l7 3.5-9 9.5z" fill="#f4a8c8" stroke="#c87898" stroke-width="0.8"/><path d="M1 12l7 4v2l-7-4z" fill="#d888a8"/><path d="M8 16l9-9.5v2L8 18z" fill="#e898b8"/></svg>
<svg style="left:534px;top:50px" width="18" height="18" viewBox="0 0 18 18"><rect x="6" y="2" width="11" height="11" rx="3" fill="#3a3a3a"/><circle cx="12.5" cy="7.5" r="3.6" fill="#f4b810"/><rect x="6" y="4" width="3" height="7" fill="#f4b810"/><path d="M7 12L1.5 16.5" stroke="#e8a810" stroke-width="2.6"/><path d="M1 15.5l2 2" stroke="#333" stroke-width="1.5"/></svg>
<svg style="left:566px;top:50px" width="18" height="18" viewBox="0 0 18 18"><path d="M6 7l10-1.5 1 9-9 2z" fill="#d8d0b0" stroke="#444" stroke-width="1"/><path d="M7 6q4-6 9-0.5" fill="none" stroke="#333" stroke-width="1.6"/><path d="M6 5q-5 4-4 13q2-5 5-8z" fill="#f4e020" stroke="#888" stroke-width="0.5"/></svg>
<svg style="left:598px;top:50px" width="18" height="18" viewBox="0 0 18 18"><path d="M1 12.5l8-3 8 3-8 3.5z" fill="#e8dcc0" stroke="#8a7a5a" stroke-width="0.7"/><path d="M1 12.5v2.5l8 3.5 8-3.5v-2.5l-8 3.5z" fill="#b8a480" stroke="#7a6a4a" stroke-width="0.6"/><path d="M9 1l-4.5 5.5h3v6h3v-6h3z" fill="#e81010"/></svg>
<svg style="left:631px;top:50px" width="18" height="18" viewBox="0 0 18 18"><path d="M1 2l6 3 2-2 2 2 6-3-3 6 2 2-2 2 3 6-6-3-2 2-2-2-6 3 3-6-2-2 2-2z" fill="#e81010" stroke="#a80000" stroke-width="0.5"/><circle cx="9" cy="9" r="2.2" fill="#f8c8c8"/></svg>
<svg style="left:663px;top:50px" width="18" height="18" viewBox="0 0 18 18"><path d="M3 8a6.5 6.5 0 0 1 11.5-3" fill="none" stroke="#e81010" stroke-width="2.6"/><path d="M15 10a6.5 6.5 0 0 1-11.5 3" fill="none" stroke="#e81010" stroke-width="2.6"/><path d="M11.5 1.5l5.5 3-4.5 3.5z" fill="#e81010"/><path d="M6.5 16.5L1 13.5l4.5-3.5z" fill="#e81010"/></svg>
<svg style="left:695px;top:50px" width="18" height="18" viewBox="0 0 18 18"><path d="M3 17.5Q1 7 13 3" fill="none" stroke="#222" stroke-width="1.5"/><path d="M8 15q0-7 8-9" fill="none" stroke="#333" stroke-width="1.1"/><path d="M4 3l8 2-4 5z" fill="#e81010"/><path d="M8 5l4 5" stroke="#e81010" stroke-width="2"/></svg>
<svg style="left:727px;top:50px" width="18" height="18" viewBox="0 0 18 18"><path d="M5 4q-4 3-2 6q3 3 10 0" fill="none" stroke="#333" stroke-width="1.6"/><path d="M9 1l5 4-3 1 2 6-3 4-2-1 2-4-3-4z" fill="#3a8ae8" stroke="#1a5ab8" stroke-width="0.6"/><path d="M2 9l4 6 4-2-3-5z" fill="#3a8ae8"/><path d="M11 2q5 6 0 15" fill="none" stroke="#333" stroke-width="1.3"/></svg>
<svg style="left:759px;top:50px" width="18" height="18" viewBox="0 0 18 18"><path d="M4 17l-3-6 2-1 2.5 2.5L6 5l2-0.5 1 5.5 1-7 2 0.3-0.5 7 2-5 2 0.8-2 6 2-2 1.5 1-4 6z" fill="#fff" stroke="#555" stroke-width="0.9" stroke-linejoin="round"/></svg>
<svg style="left:790px;top:50px" width="18" height="18" viewBox="0 0 18 18"><circle cx="7.5" cy="6.5" r="5" fill="#bcdcf4" stroke="#2a2a2a" stroke-width="1.8"/><path d="M11 10.5l6 6.5" stroke="#1a1a1a" stroke-width="2.6" stroke-linecap="round"/></svg>
<svg style="left:822px;top:50px" width="18" height="18" viewBox="0 0 18 18"><circle cx="9" cy="8" r="4.5" fill="#bcdcf4" stroke="#2a2a2a" stroke-width="1.6"/><path d="M0.5 0.5h5l-5 5zM17.5 0.5v5l-5-5zM0.5 16.5v-5l5 5zM17.5 16.5h-5l5-5z" fill="#2a6ad8"/></svg>
<svg style="left:855px;top:50px" width="18" height="18" viewBox="0 0 18 18"><path d="M2 6l4-3h10l-1 9H2z" fill="#efe6c8" stroke="#555" stroke-width="0.8"/><rect x="9" y="4" width="7" height="4" fill="#3a70c8"/><rect x="9" y="8" width="5" height="6" fill="#f8f020" stroke="#555" stroke-width="0.5"/><path d="M3 9q2-3 5 0v4H3z" fill="#e8c860"/></svg>
<svg style="left:886px;top:50px" width="18" height="18" viewBox="0 0 18 18"><path d="M2 2l6 5 8-2 1 9H4z" fill="#d8d0c0" stroke="#999" stroke-width="0.8"/></svg>
<svg style="left:918px;top:50px" width="18" height="18" viewBox="0 0 18 18"><path d="M6 4l5-2 3 4-2 8H5z" fill="#8a4a2a" stroke="#333" stroke-width="0.6"/><ellipse cx="5" cy="13" rx="3" ry="2" fill="#e8d8c0"/><path d="M12 10l4 4" stroke="#888" stroke-width="1.5"/></svg>
<svg style="left:951px;top:50px" width="18" height="18" viewBox="0 0 18 18"><circle cx="9" cy="3.5" r="2.5" fill="#f0a020" stroke="#555" stroke-width="0.6"/><rect x="6.5" y="6" width="5" height="9" rx="1.5" fill="#e87a20" stroke="#555" stroke-width="0.6"/><path d="M11 13l6-3" stroke="#777" stroke-width="1.5"/></svg>
<svg style="left:983px;top:50px" width="18" height="18" viewBox="0 0 18 18"><circle cx="9" cy="9" r="8" fill="#2a5ac8"/><path d="M1.5 8q7-4 15 0M2 12q7-4 14 0" stroke="#fff" stroke-width="2" fill="none"/><path d="M6 13h6l-3 4z" fill="#f0a010"/></svg>
<svg style="left:1015px;top:50px" width="18" height="18" viewBox="0 0 18 18"><path d="M2 6l7-3 7 2-1 8H3z" fill="#a89070" stroke="#444" stroke-width="0.8"/><path d="M2 6l7 2 7-3" stroke="#555" stroke-width="0.8" fill="none"/><rect x="11" y="9" width="5" height="6" fill="#f8f020"/></svg>
<svg style="left:1047px;top:50px" width="18" height="18" viewBox="0 0 18 18"><path d="M2 6l7-3 7 2-1 8H3z" fill="#a89070" stroke="#444" stroke-width="0.8"/><path d="M2 6l7 2 7-3" stroke="#555" stroke-width="0.8" fill="none"/><path d="M3 15l4-6 4 6z" fill="#f09010"/></svg>
<div class="a" style="left:1079px;top:50px;width:150px;height:17px;border:1px solid #9a9a9a;border-radius:4px;background:linear-gradient(#fbfbfb,#ececec)"></div>
<div class="a" style="left:1104px;top:53px;width:1px;height:12px;background:#b8b8b8"></div>
<div class="a" style="left:1129px;top:53px;width:1px;height:12px;background:#b8b8b8"></div>
<div class="a" style="left:1154px;top:53px;width:1px;height:12px;background:#b8b8b8"></div>
<div class="a" style="left:1179px;top:53px;width:1px;height:12px;background:#b8b8b8"></div>
<div class="a" style="left:1204px;top:53px;width:1px;height:12px;background:#b8b8b8"></div>
<svg style="left:1079px;top:50px" width="150" height="18" viewBox="0 0 150 18">
<path d="M5 9l8-6 10 5-2 3-8-4-6 4v7h13v-6" fill="#fff" stroke="#333" stroke-width="1.1"/><path d="M13 3l10 5-3 3-7-4z" fill="#b89a70" stroke="#333" stroke-width="0.8"/><rect x="10" y="11" width="3" height="6" fill="#111"/>
<rect x="31" y="2.5" width="13" height="14" fill="#c4a276" stroke="#555" stroke-width="0.8"/><path d="M37.5 2.5v14" stroke="#8a6a40" stroke-width="0.8"/><rect x="40" y="6" width="2" height="4" fill="#fff"/>
<path d="M55 10l7.5-7 7.5 7" fill="none" stroke="#333" stroke-width="1.4"/><path d="M57 9v8h11V9" fill="#fff" stroke="#444" stroke-width="0.8"/><rect x="61" y="12" width="3" height="5" fill="#111"/>
<rect x="79" y="1.5" width="17" height="8" fill="#b89a70" stroke="#666" stroke-width="0.8"/><rect x="79" y="9.5" width="17" height="7.5" fill="#fff" stroke="#777" stroke-width="0.8"/>
<rect x="104" y="2" width="17" height="7.5" fill="#b89a70" stroke="#666" stroke-width="0.8"/><rect x="104" y="9.5" width="17" height="7.5" fill="#fff" stroke="#777" stroke-width="0.8"/><rect x="112" y="1.5" width="5" height="5" fill="#fff" stroke="#555" stroke-width="0.7"/>
<path d="M128 9l7.5-7 7.5 7" fill="none" stroke="#333" stroke-width="1.4"/><path d="M129.5 8v9h12V8" fill="#fff" stroke="#555" stroke-width="0.8"/>
</svg>
<svg style="left:300px;top:77px" width="980" height="658" viewBox="0 0 980 658"><defs><linearGradient id="sky" x1="0" y1="0" x2="0" y2="1"><stop offset="0" stop-color="#70c3f8"/><stop offset="0.45" stop-color="#a0d7fa"/><stop offset="1" stop-color="#d9eefa"/></linearGradient><linearGradient id="cyl" x1="0" y1="0" x2="1" y2="0"><stop offset="0" stop-color="#e8e8e8"/><stop offset="0.12" stop-color="#fbfbfb"/><stop offset="0.65" stop-color="#ffffff"/><stop offset="0.88" stop-color="#d0d0d0"/><stop offset="1" stop-color="#8c8c8c"/></linearGradient><linearGradient id="disc" gradientUnits="userSpaceOnUse" x1="300" y1="190" x2="360" y2="290"><stop offset="0" stop-color="#e4e4e4"/><stop offset="0.3" stop-color="#ffffff"/><stop offset="0.7" stop-color="#f0f0f0"/><stop offset="1" stop-color="#9a9a9a"/></linearGradient></defs><rect x="0" y="0" width="980" height="329" fill="url(#sky)"/><rect x="0" y="329" width="980" height="329" fill="#9bbd8f"/><line x1="0" y1="513.5" x2="980" y2="513.5" stroke="#b01818" stroke-width="1"/><line x1="685" y1="513.5" x2="980" y2="513.5" stroke="#9bbd8f" stroke-width="1.2"/><line x1="685" y1="513.5" x2="720" y2="513.5" stroke="#c02020" stroke-width="1" stroke-dasharray="2 3"/><line x1="483.5" y1="0" x2="483.5" y2="566" stroke="#1010c0" stroke-width="1.3"/><line x1="483.5" y1="566" x2="483.5" y2="658" stroke="#2020c0" stroke-width="1" stroke-dasharray="2 3"/><line x1="461" y1="658" x2="483.5" y2="513.5" stroke="#10b010" stroke-width="1.2"/><line x1="483.5" y1="513.5" x2="511.5" y2="332" stroke="#2a9a2a" stroke-width="0.9" stroke-dasharray="1.2 3"/><path d="M166.8,275.8 Q246,272 326,276.5 L326,327.5 L166.8,327.5z" fill="url(#cyl)" stroke="#111" stroke-width="1"/><ellipse cx="352" cy="225.5" rx="50.8" ry="63.6" fill="url(#disc)" stroke="#111" stroke-width="1.1"/><polygon points="363.1,163.4 388.1,170.4 365.9,294.6 340.9,287.6" fill="url(#disc)"/><line x1="363.1" y1="163.4" x2="388.1" y2="170.4" stroke="#111" stroke-width="1.1"/><line x1="340.9" y1="287.6" x2="365.9" y2="294.6" stroke="#111" stroke-width="1.1"/><ellipse cx="377" cy="232.5" rx="50.8" ry="63.6" fill="#e5e5e5" stroke="#111" stroke-width="1.1"/><path d="M368,447 L368,489 Q418,499 468,489 L468,447z" fill="url(#cyl)" stroke="#111" stroke-width="1"/><ellipse cx="418" cy="447" rx="50" ry="6.5" fill="#6a6a6a" stroke="#111" stroke-width="1"/><polygon points="73.5,441.3 197.4,409.4 368.2,409.4 311.6,441.3" fill="#676767" stroke="#111" stroke-width="1"/><polygon points="311.6,441.3 368.2,409.4 368.2,525.3 311.6,604.3" fill="#686868" stroke="#111" stroke-width="1"/><rect x="73.5" y="441.29999999999995" width="238.10000000000002" height="163.0" fill="#fff" stroke="#111" stroke-width="1.2"/><polygon points="480.5,426.0 487.5,401.2 642.3,401.2 685.3,426.0" fill="#676767" stroke="#111" stroke-width="1"/><rect x="480.5" y="426" width="204.79999999999995" height="140" fill="#fff" stroke="#111" stroke-width="1.2"/><polygon points="718.5,401.8 730.0,402.0 730.0,515.5 718.5,507.8" fill="#676767" stroke="#111" stroke-width="1"/><path d="M407.0,333.0Q412.0,325.0 424.0,326.5Q435.0,329.0 436.0,341.0L437.0,357.0Q441.0,361.0 439.0,365.0L424.0,367.0Q419.0,363.0 417.0,355.0Q410.0,351.0 407.0,343.0z" fill="#4a2a1a" stroke="#111" stroke-width="0.9" stroke-linejoin="round"/><path d="M409.0,334.0Q414.0,330.0 418.0,332.0L419.0,349.0Q418.0,354.0 415.0,355.0L417.0,360.0L412.0,360.0L412.0,354.0Q409.0,352.0 409.0,349.0L407.0,347.0Q406.0,344.0 407.5,341.0Q408.0,336.0 409.0,334.0z" fill="#f4d8ac" stroke="#111" stroke-width="0.8" stroke-linejoin="round"/><path d="M402.0,419.0L440.0,421.0Q446.0,443.0 449.0,483.0L450.0,511.0L433.0,512.0L423.0,444.0L426.0,511.0L412.0,510.0Q408.0,463.0 406.0,443.0z" fill="#273756" stroke="#111" stroke-width="0.9" stroke-linejoin="round"/><path d="M413.0,510.0L426.0,511.0L427.0,519.0Q419.0,521.0 412.0,520.0Q411.0,514.0 413.0,510.0z" fill="#8a8a8a" stroke="#111" stroke-width="0.9" stroke-linejoin="round"/><path d="M433.0,511.0L449.0,511.0Q457.0,514.0 458.0,519.0L444.0,521.0Q434.0,521.0 433.0,517.0z" fill="#8a8a8a" stroke="#111" stroke-width="0.9" stroke-linejoin="round"/><path d="M395.0,407.0L403.0,408.0L404.0,423.0Q407.0,431.0 404.0,440.0Q399.0,440.0 396.0,433.0Q394.0,423.0 395.0,407.0z" fill="#f4d8ac" stroke="#111" stroke-width="0.8" stroke-linejoin="round"/><path d="M439.0,405.0L448.0,404.0L446.0,423.0Q445.0,438.0 442.0,445.0Q436.0,443.0 434.0,431.0L438.0,423.0z" fill="#f4d8ac" stroke="#111" stroke-width="0.8" stroke-linejoin="round"/><path d="M401.0,361.0L413.0,357.0L422.0,369.0L430.0,360.0L442.0,360.0Q447.0,368.0 448.0,393.0L448.0,404.0L439.0,405.0L438.0,391.0L438.0,423.0L402.0,420.0L403.0,399.0L402.0,408.0L394.0,407.0Q394.0,378.0 401.0,361.0z" fill="#129a24" stroke="#111" stroke-width="0.9" stroke-linejoin="round"/><path d="M413,357 L422,369 L430,360" fill="none" stroke="#0a5a12" stroke-width="1.6"/></svg>
<div class="a" style="left:300px;top:734px;width:980px;height:29px;background:linear-gradient(#ededed,#e4e4e4);border-top:1px solid #c8c8c8;border-radius:0 0 0 5px"></div>
<svg style="left:306.2px;top:740px" width="19" height="19" viewBox="0 0 19 19"><circle cx="9.5" cy="9.5" r="8.5" fill="#f2ecd8" stroke="#7a5a20" stroke-width="1.9"/><path d="M9.5 10v5.5" stroke="#6a6a6a" stroke-width="1.2"/><circle cx="9.5" cy="7" r="3.2" fill="#f4b0a8" stroke="#b07070" stroke-width="0.8"/></svg>
<svg style="left:330.3px;top:740px" width="19" height="19" viewBox="0 0 19 19"><circle cx="9.5" cy="9.5" r="8.5" fill="#f2ecd8" stroke="#7a5a20" stroke-width="1.9"/><circle cx="9.5" cy="4.8" r="1.9" fill="#111"/><path d="M7.5 7.5h4l0.5 5h-1l-0.3 4.5h-2.4l-0.3-4.5h-1z" fill="#111"/></svg>
<svg style="left:354.3px;top:740px" width="19" height="19" viewBox="0 0 19 19"><circle cx="9.5" cy="9.5" r="8.5" fill="#f2ecd8" stroke="#7a5a20" stroke-width="1.9"/><text x="4" y="14.5" font-size="13" font-family="Liberation Serif" fill="#9a8a6a">G</text></svg>
<div class="a" style="left:377px;top:739px;width:1px;height:20px;background:#9a9a9a"></div>
<svg style="left:381px;top:740px" width="19" height="19" viewBox="0 0 19 19"><circle cx="9.5" cy="9.5" r="8.4" fill="#fff" stroke="#2a5a9a" stroke-width="2.2"/><text x="4.8" y="15" font-size="14" font-weight="bold" font-family="Liberation Sans" fill="#111">?</text></svg>
<div class="t" style="left:408.5px;top:743.0px;font-size:13px;color:#111;letter-spacing:0.5px;">Seleziona oggetti. MAIUSC per estendere la selezione. Trascina il mouse per selezione multipla.</div>
<div class="t" style="left:1078px;top:743.0px;font-size:13px;color:#6a6a6a;letter-spacing:0.4px;">Misure</div>
<div class="a" style="left:1125px;top:739px;width:155px;height:20px;background:#fff;border:1px solid #c4c4c4;border-right:none"></div>
<div class="a" style="left:835px;top:63px;width:321px;height:126px;background:#ebebeb;border:1px solid #a8a8a8;box-shadow:0 3px 8px rgba(0,0,0,.35)"></div>
<div class="a" style="left:836px;top:64px;width:319px;height:15px;background:linear-gradient(#f2f2f2,#d8d8d8);border-bottom:1px solid #9a9a9a"></div>
<div class="a" style="left:841px;top:66px;width:11px;height:11px;border-radius:50%;border:1px solid #6a6a6a;background:radial-gradient(circle at 50% 35%,#fff,#c8c8c8 60%,#9a9a9a)"></div>
<div class="t" style="left:835px;width:321px;text-align:center;top:66px;font-size:11.3px;color:#111;letter-spacing:0">Informazioni entità</div>
<div class="t" style="left:842.5px;top:87.6px;font-size:12.3px;color:#111;letter-spacing:0.1px;">5 entità</div>
<div class="a" style="left:836px;top:109px;width:319px;height:1px;background:#a8a8a8"></div>
<div class="a" style="left:1130px;top:83px;width:13px;height:11px;background:linear-gradient(#9a9a9a,#7a7a7a);border:1px solid #6a6a6a"></div>
<div class="a" style="left:1132.5px;top:87px;width:8px;height:2.5px;background:#fff"></div>
<svg style="left:1130px;top:94px" width="13" height="10" viewBox="0 0 13 10"><rect x="0.5" y="0" width="12" height="9.5" fill="#f4f4f4" stroke="#b0b0b0" stroke-width="0.8"/><path d="M2.5 7.5l4-4 4 4z" fill="#8a8a8a"/></svg>
<div class="a" style="left:843px;top:117px;width:33px;height:50px;background:#fff;border:1px solid #b0b0b0"></div>
<svg style="left:846px;top:121px" width="27" height="42" viewBox="0 0 27 42"><rect x="1" y="1" width="25" height="40" fill="#c4c6dc" stroke="#666" stroke-width="1.6"/><path d="M1 1h25v40z" fill="#fff"/><path d="M1 1L26 41" stroke="#111" stroke-width="1.4"/><rect x="1" y="1" width="25" height="40" fill="none" stroke="#777" stroke-width="1.6"/></svg>
<div class="t" style="left:936px;top:120.6px;font-size:12.3px;color:#111;letter-spacing:0.1px;">Layer:</div>
<div class="a" style="left:976px;top:118px;width:172px;height:18px;background:#fff;border:1px solid #b4b4b4;border-radius:3px"></div>
<div class="a" style="left:1131px;top:119px;width:1px;height:16px;background:#c8c8c8"></div>
<svg style="left:1134px;top:124px" width="9" height="7" viewBox="0 0 9 7"><path d="M0 0h9l-4.5 7z" fill="#333"/></svg>
<div class="t" style="left:980px;top:120.9px;font-size:12.5px;color:#111;letter-spacing:0.2px;">Layer0</div>
<div class="a" style="left:975px;top:143px;width:12px;height:12px;background:linear-gradient(#fff,#e4e4e4);border:1px solid #9a9a9a;border-radius:2px"></div>
<div class="t" style="left:992px;top:142.6px;font-size:12.3px;color:#111;letter-spacing:0.1px;">Nascosto</div>
<svg style="left:1144px;top:177px" width="10" height="10" viewBox="0 0 10 10"><path d="M9 1L1 9M9 4L4 9M9 7L7 9" stroke="#8a8a8a" stroke-width="1"/></svg>
<div class="a" style="left:1027px;top:300px;width:262px;height:375px;background:#ebebeb;border:1px solid #a8a8a8;box-shadow:0 3px 8px rgba(0,0,0,.35)"></div>
<div class="a" style="left:1028px;top:301px;width:260px;height:15px;background:linear-gradient(#f2f2f2,#d8d8d8);border-bottom:1px solid #9a9a9a"></div>
<div class="a" style="left:1033px;top:303px;width:11px;height:11px;border-radius:50%;border:1px solid #6a6a6a;background:radial-gradient(circle at 50% 35%,#fff,#c8c8c8 60%,#9a9a9a)"></div>
<div class="t" style="left:1027px;width:262px;text-align:center;top:303px;font-size:11.3px;color:#111;letter-spacing:0"></div>
<div class="t" style="left:1132px;top:302.9px;font-size:11.3px;color:#111;letter-spacing:0px;">Struttura</div>
<div class="a" style="left:1039px;top:325px;width:205px;height:22px;background:#fff;border:1px solid #a4a4a4;border-radius:11px;box-shadow:inset 0 1px 2px rgba(0,0,0,.25)"></div>
<svg style="left:1044px;top:329px" width="14" height="14" viewBox="0 0 14 14"><circle cx="5.5" cy="5.5" r="4" fill="none" stroke="#555" stroke-width="1.6"/><path d="M8.5 8.5l4 4" stroke="#555" stroke-width="2"/></svg>
<svg style="left:1253px;top:327px" width="14" height="18" viewBox="0 0 14 18"><path d="M1 3h8l4 6-4 6H1z" fill="#111"/><rect x="2.5" y="4.5" width="6" height="9" fill="#dfe8f4"/><path d="M3.5 7h4M3.5 9h4M3.5 11h4" stroke="#333" stroke-width="0.8"/><rect x="2.5" y="4.5" width="6" height="2" fill="#5a8ad0"/></svg>
<div class="a" style="left:1034px;top:354px;width:236px;height:307px;background:#fff;border:2px solid #9a9ea6;border-top-color:#7a7e86;box-shadow:inset 0 1px 1px rgba(0,0,0,.2)"></div>
<svg style="left:1044px;top:361px" width="10" height="9" viewBox="0 0 10 9"><path d="M0 0h10L5 8.5z" fill="#7a7a7a"/></svg>
<svg style="left:1059px;top:360px" width="12" height="12" viewBox="0 0 12 12"><rect x="0.6" y="0.6" width="10.8" height="10.8" fill="#fff" stroke="#111" stroke-width="1.2"/><path d="M3 6.5L6 3.5 9 6.5V9.5H3z" fill="none" stroke="#111" stroke-width="0.9"/><rect x="5.3" y="7.3" width="1.4" height="2.2" fill="#111"/></svg>
<div class="t" style="left:1074px;top:359.4px;font-size:12.5px;color:#111;letter-spacing:0.2px;">Senza titolo</div>
<svg style="left:1078px;top:380px" width="8" height="8" viewBox="0 0 8 8"><rect x="0" y="0" width="3" height="3" fill="#111"/><rect x="5" y="0" width="3" height="3" fill="#111"/><rect x="0" y="5" width="3" height="3" fill="#111"/><rect x="5" y="5" width="3" height="3" fill="#111"/></svg>
<div class="t" style="left:1091.5px;top:378.4px;font-size:12.5px;color:#111;letter-spacing:0.15px;">&lt;Susan&gt;</div>
<svg style="left:1078px;top:398px" width="8" height="8" viewBox="0 0 8 8"><rect x="0" y="0" width="3" height="3" fill="#111"/><rect x="5" y="0" width="3" height="3" fill="#111"/><rect x="0" y="5" width="3" height="3" fill="#111"/><rect x="5" y="5" width="3" height="3" fill="#111"/></svg>
<div class="t" style="left:1090.5px;top:396.4px;font-size:12.5px;color:#111;letter-spacing:0.15px;">Pallo &lt;Blocco Basico 2&gt;</div>
<svg style="left:1078px;top:416px" width="8" height="8" viewBox="0 0 8 8"><rect x="0" y="0" width="3" height="3" fill="#111"/><rect x="5" y="0" width="3" height="3" fill="#111"/><rect x="0" y="5" width="3" height="3" fill="#111"/><rect x="5" y="5" width="3" height="3" fill="#111"/></svg>
<div class="t" style="left:1090.5px;top:414.4px;font-size:12.5px;color:#111;letter-spacing:0.15px;">Pallo &lt;Blocco Basico 2&gt;</div>
<svg style="left:1078px;top:434px" width="8" height="8" viewBox="0 0 8 8"><rect x="0" y="0" width="3" height="3" fill="#111"/><rect x="5" y="0" width="3" height="3" fill="#111"/><rect x="0" y="5" width="3" height="3" fill="#111"/><rect x="5" y="5" width="3" height="3" fill="#111"/></svg>
<div class="t" style="left:1090.5px;top:432.4px;font-size:12.5px;color:#111;letter-spacing:0.15px;">Pallo &lt;Blocco Basico 2&gt;</div>
<svg style="left:1078px;top:452px" width="8" height="8" viewBox="0 0 8 8"><rect x="0" y="0" width="3" height="3" fill="#111"/><rect x="5" y="0" width="3" height="3" fill="#111"/><rect x="0" y="5" width="3" height="3" fill="#111"/><rect x="5" y="5" width="3" height="3" fill="#111"/></svg>
<div class="t" style="left:1090.5px;top:450.4px;font-size:12.5px;color:#111;letter-spacing:0.15px;">Pinco &lt;blocco Basico&gt;</div>
<svg style="left:1078px;top:470px" width="8" height="8" viewBox="0 0 8 8"><rect x="0" y="0" width="3" height="3" fill="#111"/><rect x="5" y="0" width="3" height="3" fill="#111"/><rect x="0" y="5" width="3" height="3" fill="#111"/><rect x="5" y="5" width="3" height="3" fill="#111"/></svg>
<div class="t" style="left:1090.5px;top:468.4px;font-size:12.5px;color:#111;letter-spacing:0.15px;">Pinco &lt;blocco Basico&gt;</div>
<svg style="left:1078px;top:488px" width="8" height="8" viewBox="0 0 8 8"><rect x="0" y="0" width="3" height="3" fill="#111"/><rect x="5" y="0" width="3" height="3" fill="#111"/><rect x="0" y="5" width="3" height="3" fill="#111"/><rect x="5" y="5" width="3" height="3" fill="#111"/></svg>
<div class="t" style="left:1090.5px;top:486.4px;font-size:12.5px;color:#111;letter-spacing:0.15px;">Pinco &lt;blocco Basico&gt;</div>
<svg style="left:1268px;top:662px" width="10" height="10" viewBox="0 0 10 10"><path d="M9 1L1 9M9 4L4 9M9 7L7 9" stroke="#8a8a8a" stroke-width="1"/></svg>
<div class="a" style="left:172px;top:22px;width:292px;height:483px;background:rgba(255,255,255,0.975);border-radius:0 0 5px 5px;box-shadow:0 5px 14px rgba(0,0,0,.38), 0 0 1px rgba(0,0,0,.3)"></div>
<div class="t" style="left:193px;top:28.1px;font-size:14px;color:#111;letter-spacing:0.6px;">Annulla Rettangolo</div>
<div class="t" style="right:830px;top:27.5px;font-size:14px;color:#111;letter-spacing:0.5px">⌘Z</div>
<div class="t" style="left:193px;top:47.1px;font-size:14px;color:#9e9e9e;letter-spacing:0.6px;">Ripeti</div>
<div class="t" style="right:830px;top:46.5px;font-size:14px;color:#9e9e9e;letter-spacing:0.5px">⇧⌘Z</div>
<div class="a" style="left:172px;top:70px;width:292px;height:1px;background:#e2e2e2"></div>
<div class="t" style="left:193px;top:78.1px;font-size:14px;color:#111;letter-spacing:0.6px;">Taglia</div>
<div class="t" style="right:830px;top:77.5px;font-size:14px;color:#111;letter-spacing:0.5px">⌘X</div>
<div class="t" style="left:193px;top:97.1px;font-size:14px;color:#111;letter-spacing:0.6px;">Copia</div>
<div class="t" style="right:830px;top:96.5px;font-size:14px;color:#111;letter-spacing:0.5px">⌘C</div>
<div class="t" style="left:193px;top:116.1px;font-size:14px;color:#111;letter-spacing:0.6px;">Incolla</div>
<div class="t" style="right:830px;top:115.5px;font-size:14px;color:#111;letter-spacing:0.5px">⌘V</div>
<div class="t" style="left:193px;top:135.1px;font-size:14px;color:#111;letter-spacing:0.6px;">Incolla sul posto</div>
<div class="t" style="left:193px;top:154.1px;font-size:14px;color:#111;letter-spacing:0.6px;">Elimina</div>
<div class="t" style="left:193px;top:173.1px;font-size:14px;color:#111;letter-spacing:0.6px;">Elimina guide</div>
<div class="a" style="left:172px;top:196px;width:292px;height:1px;background:#e2e2e2"></div>
<div class="t" style="left:193px;top:204.1px;font-size:14px;color:#111;letter-spacing:0.6px;">Seleziona tutto</div>
<div class="t" style="right:830px;top:203.5px;font-size:14px;color:#111;letter-spacing:0.5px">⌘A</div>
<div class="t" style="left:193px;top:223.1px;font-size:14px;color:#9e9e9e;letter-spacing:0.6px;">Annulla selezione</div>
<div class="t" style="right:830px;top:222.5px;font-size:14px;color:#9e9e9e;letter-spacing:0.5px">⇧⌘A</div>
<div class="a" style="left:172px;top:246px;width:292px;height:1px;background:#e2e2e2"></div>
<div class="t" style="left:193px;top:254.1px;font-size:14px;color:#111;letter-spacing:0.6px;">Nascondi</div>
<div class="t" style="right:830px;top:253.5px;font-size:14px;color:#111;letter-spacing:0.5px">⌘E</div>
<div class="t" style="left:193px;top:273.1px;font-size:14px;color:#111;letter-spacing:0.6px;">Mostra</div>
<svg style="left:445px;top:276px" width="8" height="9" viewBox="0 0 8 9"><path d="M0 0l8 4.5-8 4.5z" fill="#222"/></svg>
<div class="a" style="left:172px;top:296px;width:292px;height:1px;background:#e2e2e2"></div>
<div class="t" style="left:193px;top:304.1px;font-size:14px;color:#9e9e9e;letter-spacing:0.6px;">Blocca</div>
<div class="t" style="left:193px;top:323.1px;font-size:14px;color:#111;letter-spacing:0.6px;">Sblocca</div>
<svg style="left:445px;top:326px" width="8" height="9" viewBox="0 0 8 9"><path d="M0 0l8 4.5-8 4.5z" fill="#222"/></svg>
<div class="a" style="left:172px;top:346px;width:292px;height:1px;background:#e2e2e2"></div>
<div class="t" style="left:193px;top:354.1px;font-size:14px;color:#111;letter-spacing:0.6px;">Crea componente...</div>
<div class="t" style="right:830px;top:353.5px;font-size:14px;color:#111;letter-spacing:0.5px">⇧⌘G</div>
<div class="t" style="left:193px;top:373.1px;font-size:14px;color:#111;letter-spacing:0.6px;">Crea gruppo</div>
<div class="t" style="right:830px;top:372.5px;font-size:14px;color:#111;letter-spacing:0.5px">⌘G</div>
<div class="t" style="left:193px;top:392.1px;font-size:14px;color:#9e9e9e;letter-spacing:0.6px;">Chiudi gruppo/componente</div>
<div class="t" style="right:830px;top:391.5px;font-size:14px;color:#9e9e9e;letter-spacing:0.5px">^⇧⌘G</div>
<div class="a" style="left:172px;top:415px;width:292px;height:1px;background:#e2e2e2"></div>
<div class="t" style="left:193px;top:423.1px;font-size:14px;color:#111;letter-spacing:0.6px;">Interseca facce</div>
<svg style="left:445px;top:426px" width="8" height="9" viewBox="0 0 8 9"><path d="M0 0l8 4.5-8 4.5z" fill="#222"/></svg>
<div class="a" style="left:172px;top:446px;width:292px;height:1px;background:#e2e2e2"></div>
<div class="t" style="left:193px;top:454.1px;font-size:14px;color:#111;letter-spacing:0.6px;">5 entità</div>
<svg style="left:445px;top:457px" width="8" height="9" viewBox="0 0 8 9"><path d="M0 0l8 4.5-8 4.5z" fill="#222"/></svg>
<div class="a" style="left:172px;top:477px;width:292px;height:1px;background:#e2e2e2"></div>
<div class="t" style="left:193px;top:485.1px;font-size:14px;color:#111;letter-spacing:0.6px;">Caratteri speciali...</div>
<div class="t" style="right:830px;top:484.5px;font-size:14px;color:#111;letter-spacing:0.5px">⌥⌘T</div>
<div class="a" style="left:0px;top:0px;width:1280px;height:22px;background:linear-gradient(#fbfbfc 0,#e4e5ea 10%,#cfd0d6 50%,#b3b4bc 100%);border-bottom:1px solid #151515"></div>
<div class="a" style="left:172px;top:0px;width:76px;height:21px;background:linear-gradient(#727d8e,#5a6475)"></div>
<svg style="left:21px;top:1.5px" width="15.5" height="18" viewBox="0 0 17 19"><path d="M11.8 0.3c0.1 1.2-0.4 2.3-1.1 3.1-0.7 0.8-1.8 1.4-2.9 1.3-0.1-1.1 0.4-2.3 1.1-3 0.7-0.8 1.9-1.4 2.9-1.4zM15.8 13.3c-0.5 1.1-0.7 1.6-1.3 2.5-0.9 1.3-2.1 3-3.6 3-1.3 0-1.7-0.9-3.5-0.9-1.8 0-2.2 0.9-3.5 0.9-1.5 0-2.6-1.5-3.5-2.8-2.4-3.7-2.7-8-1.2-10.3 1.1-1.6 2.7-2.6 4.3-2.6 1.6 0 2.6 0.9 3.9 0.9 1.3 0 2.1-0.9 3.9-0.9 1.4 0 2.900 0.8 4 2.1-3.5 1.9-2.9 6.9 0.5 8.1z" fill="#151515"/></svg>
<div class="t" style="left:54.5px;top:4.1px;font-size:14px;color:#141414;letter-spacing:0.1px;font-weight:bold;">SketchUp</div>
<div class="t" style="left:139.5px;top:4.1px;font-size:14px;color:#141414;letter-spacing:0px;">File</div>
<div class="t" style="left:181px;top:4.1px;font-size:14px;color:#fff;letter-spacing:0.5px;">Modifica</div>
<div class="t" style="left:257.5px;top:4.1px;font-size:14px;color:#141414;letter-spacing:0.5px;">Visualizza</div>
<div class="t" style="left:344.5px;top:4.1px;font-size:14px;color:#141414;letter-spacing:0.45px;">Disegno</div>
<div class="t" style="left:418.5px;top:4.1px;font-size:14px;color:#141414;letter-spacing:0.45px;">Telecamera</div>
<div class="t" style="left:514px;top:4.1px;font-size:14px;color:#141414;letter-spacing:0.5px;">Strumenti</div>
<div class="t" style="left:599px;top:4.1px;font-size:14px;color:#141414;letter-spacing:0.5px;">Finestra</div>
<div class="t" style="left:671px;top:4.1px;font-size:14px;color:#141414;letter-spacing:0.3px;">Guida</div>
<svg style="left:732px;top:5px" width="18" height="17" viewBox="0 0 18 17"><path d="M2 3.5c0.8-0.9 1.8-1.2 2.4-0.8l1.4 2.4c0.3 0.6-0.1 1.1-0.8 1.6 0.6 1.8 2 3.4 3.6 4.4 0.6-0.6 1.1-1 1.7-0.7l2.3 1.5c0.5 0.5 0.1 1.5-0.8 2.3-1 0.8-2.4 0.9-4-0.2-2.6-1.7-5-4.4-6-7.4-0.4-1.2-0.3-2.3 0.2-3.1z" fill="#1c1c1c"/><g fill="#777"><circle cx="10" cy="6" r="0.9"/><circle cx="12" cy="5" r="0.9"/><circle cx="14" cy="4" r="0.9"/><circle cx="16" cy="3" r="0.9"/></g></svg>
<svg style="left:762px;top:3px" width="17" height="16" viewBox="0 0 17 16"><path d="M3.2 5.5A6.2 6.2 0 1 1 3 10.5" fill="none" stroke="#1c1c1c" stroke-width="1.9"/><path d="M0.5 4.5l3.5 3 1.5-4z" fill="#1c1c1c"/><rect x="8.6" y="3.5" width="1.9" height="6" fill="#1c1c1c"/><rect x="8.6" y="10.8" width="1.9" height="1.9" fill="#1c1c1c"/></svg>
<svg style="left:794px;top:3px" width="15" height="16" viewBox="0 0 15 16"><path d="M4 4.5l7 6-3.5 3v-11l3.5 3-7 6" fill="none" stroke="#8a8a8a" stroke-width="1.1"/><circle cx="1.5" cy="8" r="1.2" fill="#555"/><circle cx="13.5" cy="8" r="1.2" fill="#555"/></svg>
<svg style="left:822px;top:3px" width="19" height="16" viewBox="0 0 19 16"><rect x="0.8" y="0.8" width="17.4" height="11.4" fill="#3a3a3a" stroke="#1c1c1c" stroke-width="1.6"/><rect x="7" y="12.5" width="5" height="1.5" fill="#1c1c1c"/><rect x="4" y="14" width="11" height="1.6" fill="#1c1c1c"/></svg>
<svg style="left:850px;top:3px" width="22" height="16" viewBox="0 0 22 16"><path d="M1 5.5a14 14 0 0 1 20 0" fill="none" stroke="#1c1c1c" stroke-width="2.1"/><path d="M4.3 8.6a9.5 9.5 0 0 1 13.4 0" fill="none" stroke="#1c1c1c" stroke-width="2.1"/><path d="M7.5 11.5a5 5 0 0 1 7 0" fill="none" stroke="#1c1c1c" stroke-width="2.1"/><circle cx="11" cy="14.3" r="1.5" fill="#1c1c1c"/></svg>
<svg style="left:882px;top:3px" width="18" height="16" viewBox="0 0 18 16"><path d="M0.5 5.5h3l4.5-4v13l-4.5-4h-3z" fill="#1c1c1c"/><path d="M10.2 5.2a3.5 3.5 0 0 1 0 5.6M12.5 3a6.8 6.8 0 0 1 0 10M14.8 1a10 10 0 0 1 0 14" fill="none" stroke="#1c1c1c" stroke-width="1.6"/></svg>
<div class="a" style="left:912px;top:6px;width:6px;height:11px;background:#1f9b3a"></div><div class="a" style="left:918px;top:6px;width:6px;height:11px;background:#f4f4f4"></div><div class="a" style="left:924px;top:6px;width:6px;height:11px;background:#d92b2b"></div>
<div class="t" style="left:932px;top:5.3px;font-size:12px;color:#141414;letter-spacing:0px;">Italiano</div>
<svg style="left:981px;top:5px" width="22" height="12" viewBox="0 0 22 12"><rect x="0.8" y="0.8" width="18" height="10.4" rx="1.5" fill="none" stroke="#1c1c1c" stroke-width="1.5"/><rect x="19.5" y="3.5" width="2" height="5" fill="#1c1c1c"/><path d="M4 6.8h3.5l2-3 2 4.5 1.7-2.5h3" fill="none" stroke="#1c1c1c" stroke-width="1.2"/></svg>
<div class="t" style="left:1016px;top:4.1px;font-size:14px;color:#141414;letter-spacing:0.55px;">ven 8 giu</div>
<div class="t" style="left:1088.5px;top:4.1px;font-size:14px;color:#141414;letter-spacing:0.75px;">12 09</div>
<div class="t" style="left:1144.5px;top:4.1px;font-size:14px;color:#141414;letter-spacing:1.0px;">NinoNuovo</div>
<svg style="left:1245px;top:4px" width="15" height="14" viewBox="0 0 15 14"><circle cx="5.8" cy="5.6" r="4.4" fill="none" stroke="#1c1c1c" stroke-width="1.9"/><path d="M9 8.8l4.6 4.4" stroke="#1c1c1c" stroke-width="2.4"/></svg>
</body></html>
